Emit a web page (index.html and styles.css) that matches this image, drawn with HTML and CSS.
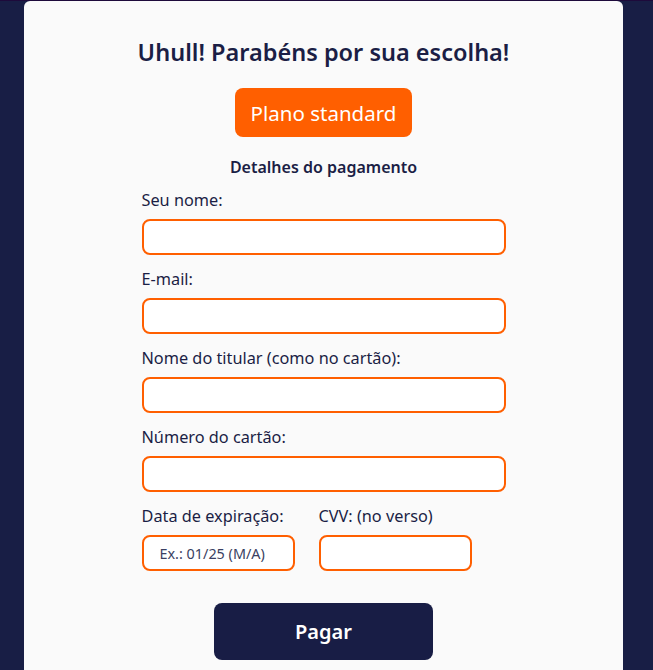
FILE: index.html
```html
<!DOCTYPE html>
<html lang="pt-BR">
<head>
<meta charset="utf-8">
<title>Pagamento</title>
<link rel="stylesheet" href="styles.css">
</head>
<body>
<div class="topline"></div>
<main class="card">
  <h1 class="title">Uhull! Parabéns por sua escolha!</h1>
  <button class="plan" type="button">Plano standard</button>
  <h2 class="subtitle">Detalhes do pagamento</h2>
  <form class="form">
    <label class="field">
      <span class="label">Seu nome:</span>
      <input class="input" type="text">
    </label>
    <label class="field">
      <span class="label">E-mail:</span>
      <input class="input" type="email">
    </label>
    <label class="field">
      <span class="label">Nome do titular (como no cartão):</span>
      <input class="input" type="text">
    </label>
    <label class="field">
      <span class="label">Número do cartão:</span>
      <input class="input" type="text">
    </label>
    <div class="row">
      <label class="field small">
        <span class="label">Data de expiração:</span>
        <input class="input" type="text" placeholder="Ex.: 01/25 (M/A)">
      </label>
      <label class="field small">
        <span class="label">CVV: (no verso)</span>
        <input class="input" type="text">
      </label>
    </div>
    <button class="pay" type="button">Pagar</button>
  </form>
</main>
</body>
</html>
```
FILE: styles.css
```css
html, body {
  margin: 0;
  padding: 0;
}
body {
  background: #181e45;
  font-family: "Noto Sans", "Open Sans", sans-serif;
  color: #1b1e45;
  height: 670px;
  overflow: hidden;
}
.topline {
  height: 1px;
  background: #1d0a3b;
}
.card {
  width: 599px;
  margin: 0 auto 0 24px;
  background: #fafafa;
  border-radius: 6px 6px 0 0;
  height: 700px;
  display: flex;
  flex-direction: column;
  align-items: center;
  box-sizing: border-box;
  padding-top: 37px;
}
.title {
  margin: 0;
  font-size: 23.5px;
  line-height: 28px;
  font-weight: 600;
  color: #1b1e45;
}
.plan {
  margin-top: 22px;
  height: 49px;
  padding: 0 16px;
  border: none;
  border-radius: 8px;
  background: #ff5f00;
  color: #ffffff;
  font-family: inherit;
  font-size: 20.5px;
  font-weight: 400;
}
.subtitle {
  margin: 20px 0 0;
  font-size: 16px;
  line-height: 20px;
  font-weight: 600;
}
.form {
  width: 364px;
  margin-top: 13px;
  display: flex;
  flex-direction: column;
  gap: 14px;
}
.field {
  display: flex;
  flex-direction: column;
  gap: 9px;
}
.label {
  font-size: 16.3px;
  line-height: 20px;
}
.input {
  box-sizing: border-box;
  height: 36px;
  width: 100%;
  border: 2px solid #ff5f00;
  border-radius: 8px;
  background: #ffffff;
  padding: 0 16px;
  font-family: inherit;
  font-size: 14.4px;
  color: #1b1e45;
  outline: none;
}
.input::placeholder {
  color: #3a3f62;
}
.row {
  display: flex;
  gap: 24px;
}
.small {
  width: 153px;
}
.pay {
  align-self: center;
  margin-top: 18px;
  width: 219px;
  height: 57px;
  border: none;
  border-radius: 8px;
  background: #181d45;
  color: #ffffff;
  font-family: inherit;
  font-size: 20px;
  font-weight: 600;
}
```
